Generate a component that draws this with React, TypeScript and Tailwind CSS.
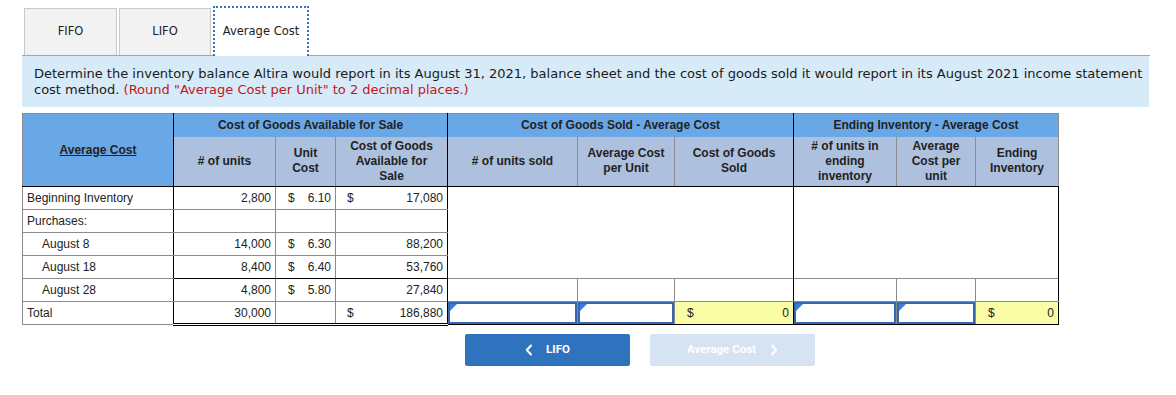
import React from "react";

const Tri = () => (
  <span className="absolute left-0 top-0 w-0 h-0 border-t-[7px] border-t-[#3b7dd8] border-r-[7px] border-r-transparent" />
);

const InputCell = () => (
  <td className="p-0 border-b border-b-black border-r border-r-[#888]">
    <div className="relative h-[22px] border-2 border-[#3568b0] bg-white">
      <Tri />
    </div>
  </td>
);

export default function App() {
  const gray = "border-[#8c8c8c]";
  return (
    <div className="w-[1176px] h-[395px] bg-white font-['Liberation_Sans',Arial,sans-serif] text-[12px] text-[#222] overflow-hidden">
      {/* Tabs */}
      <div className="pt-[6px] ml-[22px] w-[1128px]">
        <div className="flex items-end gap-[2px] pl-[2px] border-b border-[#a6a6a6]">
          <div className="w-[93px] h-[47px] flex items-center justify-center bg-[#f2f2f2] border border-[#c9c9c9] border-b-0 font-['DejaVu_Sans',Verdana,sans-serif] text-[11.5px] text-[#222]">
            FIFO
          </div>
          <div className="w-[92px] h-[47px] flex items-center justify-center bg-[#f2f2f2] border border-[#c9c9c9] border-b-0 font-['DejaVu_Sans',Verdana,sans-serif] text-[11.5px] text-[#222]">
            LIFO
          </div>
          <div className="w-[96px] h-[50px] -mb-px flex items-center justify-center bg-white border-2 border-dotted border-[#2f74c8] border-b-0 font-['DejaVu_Sans',Verdana,sans-serif] text-[11.5px] text-[#222]">
            Average Cost
          </div>
        </div>
      </div>

      {/* Instructions */}
      <div className="ml-[22px] w-[1127px] h-[51px] bg-[#d6eaf8] pl-[12px] pt-[10px] font-['DejaVu_Sans',Verdana,sans-serif] text-[13px] leading-[16px] text-[#1a1a1a] whitespace-nowrap overflow-hidden">
        <div>
          Determine the inventory balance Altira would report in its August 31, 2021, balance sheet and the cost of goods sold it would report in its August 2021 income statement
        </div>
        <div>
          cost method.{" "}
          <span className="text-[#c4161c]">(Round "Average Cost per Unit" to 2 decimal places.)</span>
        </div>
      </div>

      {/* Table */}
      <div className="ml-[22px] mt-[6px]">
        <table className="table-fixed border-collapse w-[1036px]">
          <colgroup>
            <col className="w-[151px]" />
            <col className="w-[102px]" />
            <col className="w-[60px]" />
            <col className="w-[112px]" />
            <col className="w-[130px]" />
            <col className="w-[97px]" />
            <col className="w-[119px]" />
            <col className="w-[103px]" />
            <col className="w-[79px]" />
            <col className="w-[83px]" />
          </colgroup>
          <thead className="font-bold text-[12px] text-[#222] leading-[15px]">
            <tr className="h-[23px]">
              <th rowSpan={2} className={`bg-[#6aa7e6] border-l border-t border-b border-b-black ${gray} border-r border-r-black`}>
                <span className="underline">Average Cost</span>
              </th>
              <th colSpan={3} className="bg-[#6aa7e6] border-t border-t-[#8c8c8c] border-r border-r-black">
                Cost of Goods Available for Sale
              </th>
              <th colSpan={3} className="bg-[#6aa7e6] border-t border-t-[#8c8c8c] border-r border-r-black">
                Cost of Goods Sold - Average Cost
              </th>
              <th colSpan={3} className="bg-[#6aa7e6] border-t border-t-[#8c8c8c] border-r border-r-[#8c8c8c]">
                Ending Inventory - Average Cost
              </th>
            </tr>
            <tr className="h-[50px]">
              <th className="bg-[#adc0dd] border-r border-r-[#8c8c8c] border-b border-b-black">
                # of units
              </th>
              <th className="bg-[#adc0dd] border-r border-r-[#8c8c8c] border-b border-b-black">
                Unit
                <br />
                Cost
              </th>
              <th className="bg-[#adc0dd] border-r border-r-black border-b border-b-black">
                Cost of Goods
                <br />
                Available for
                <br />
                Sale
              </th>
              <th className="bg-[#adc0dd] border-r border-r-[#8c8c8c] border-b border-b-black">
                # of units sold
              </th>
              <th className="bg-[#adc0dd] border-r border-r-[#8c8c8c] border-b border-b-black">
                Average Cost
                <br />
                per Unit
              </th>
              <th className="bg-[#adc0dd] border-r border-r-black border-b border-b-black">
                Cost of Goods
                <br />
                Sold
              </th>
              <th className="bg-[#adc0dd] border-r border-r-[#8c8c8c] border-b border-b-black">
                # of units in
                <br />
                ending
                <br />
                inventory
              </th>
              <th className="bg-[#adc0dd] border-r border-r-[#8c8c8c] border-b border-b-black">
                Average
                <br />
                Cost per
                <br />
                unit
              </th>
              <th className="bg-[#adc0dd] border-r border-r-[#8c8c8c] border-b border-b-black">
                Ending
                <br />
                Inventory
              </th>
            </tr>
          </thead>
          <tbody className="text-[12px] text-[#222] leading-[14px]">
            <tr className="h-[23px]">
              <td className="border-l border-b border-[#8c8c8c] border-r border-r-black pl-[4px]">Beginning Inventory</td>
              <td className="border-b border-[#8c8c8c] border-r text-right pr-[4px]">2,800</td>
              <td className="border-b border-[#8c8c8c] border-r pl-[12px] pr-[4px]">
                <div className="flex justify-between"><span>$</span><span>6.10</span></div>
              </td>
              <td className="border-b border-[#8c8c8c] border-r border-r-black pl-[11px] pr-[4px]">
                <div className="flex justify-between"><span>$</span><span>17,080</span></div>
              </td>
              <td rowSpan={4} colSpan={3} className="border-r border-r-black" />
              <td rowSpan={4} colSpan={3} className="border-r border-r-black" />
            </tr>
            <tr className="h-[23px]">
              <td className="border-l border-b border-[#8c8c8c] border-r border-r-black pl-[4px]">Purchases:</td>
              <td className="border-b border-[#8c8c8c] border-r" />
              <td className="border-b border-[#8c8c8c] border-r" />
              <td className="border-b border-[#8c8c8c] border-r border-r-black" />
            </tr>
            <tr className="h-[23px]">
              <td className="border-l border-b border-[#8c8c8c] border-r border-r-black pl-[19px]">August 8</td>
              <td className="border-b border-[#8c8c8c] border-r text-right pr-[4px]">14,000</td>
              <td className="border-b border-[#8c8c8c] border-r pl-[12px] pr-[4px]">
                <div className="flex justify-between"><span>$</span><span>6.30</span></div>
              </td>
              <td className="border-b border-[#8c8c8c] border-r border-r-black text-right pr-[4px]">88,200</td>
            </tr>
            <tr className="h-[23px]">
              <td className="border-l border-b border-[#8c8c8c] border-r border-r-black pl-[19px]">August 18</td>
              <td className="border-b border-b-black border-r border-r-[#8c8c8c] text-right pr-[4px]">8,400</td>
              <td className="border-b border-b-black border-r border-r-[#8c8c8c] pl-[12px] pr-[4px]">
                <div className="flex justify-between"><span>$</span><span>6.40</span></div>
              </td>
              <td className="border-b border-b-black border-r border-r-black text-right pr-[4px]">53,760</td>
            </tr>
            <tr className="h-[23px]">
              <td className="border-l border-b border-[#8c8c8c] border-r border-r-black pl-[19px]">August 28</td>
              <td className="border-b border-[#8c8c8c] border-r text-right pr-[4px]">4,800</td>
              <td className="border-b border-[#8c8c8c] border-r pl-[12px] pr-[4px]">
                <div className="flex justify-between"><span>$</span><span>5.80</span></div>
              </td>
              <td className="border-b border-[#8c8c8c] border-r border-r-black text-right pr-[4px]">27,840</td>
              <td className="border-t border-t-[#8c8c8c] border-b border-[#8c8c8c] border-r" />
              <td className="border-t border-t-[#8c8c8c] border-b border-[#8c8c8c] border-r" />
              <td className="border-t border-t-[#8c8c8c] border-b border-[#8c8c8c] border-r border-r-black" />
              <td className="border-t border-t-[#8c8c8c] border-b border-[#8c8c8c] border-r" />
              <td className="border-t border-t-[#8c8c8c] border-b border-[#8c8c8c] border-r" />
              <td className="border-t border-t-[#8c8c8c] border-b border-[#8c8c8c] border-r border-r-black" />
            </tr>
            <tr className="h-[23px]">
              <td className="border-l border-b border-[#8c8c8c] border-r border-r-black pl-[4px]">Total</td>
              <td className="border-b-[3px] border-double border-b-black border-r border-r-[#8c8c8c] text-right pr-[4px]">30,000</td>
              <td className="border-b-[3px] border-double border-b-black border-r border-r-[#8c8c8c]" />
              <td className="border-b-[3px] border-double border-b-black border-r border-r-black pl-[11px] pr-[4px]">
                <div className="flex justify-between"><span>$</span><span>186,880</span></div>
              </td>
              <InputCell />
              <InputCell />
              <td className="border-b border-b-black border-r border-r-black bg-[#fafca6] px-[4px]">
                <div className="flex justify-between pl-[8px]"><span>$</span><span>0</span></div>
              </td>
              <InputCell />
              <InputCell />
              <td className="border-b border-b-black border-r border-r-black bg-[#fafca6] px-[4px]">
                <div className="flex justify-between pl-[8px]"><span>$</span><span>0</span></div>
              </td>
            </tr>
          </tbody>
        </table>
      </div>

      {/* Buttons */}
      <div className="flex gap-[20px] ml-[465px] mt-[8px] font-['Roboto',Arial,sans-serif] font-bold text-[11.5px] text-white">
        <div className="w-[165px] h-[32px] rounded-[2px] bg-[#2f72be] flex items-center justify-center gap-[13px]">
          <svg width="8" height="12" viewBox="0 0 8 12" fill="none" stroke="white" strokeWidth="2" strokeLinecap="round" strokeLinejoin="round">
            <path d="M6 1.5 L1.8 6 L6 10.5" />
          </svg>
          <span>LIFO</span>
        </div>
        <div className="w-[165px] h-[32px] rounded-[2px] bg-[#d6e3f3] flex items-center justify-center gap-[14px]">
          <span>Average Cost</span>
          <svg width="8" height="12" viewBox="0 0 8 12" fill="none" stroke="white" strokeWidth="2" strokeLinecap="round" strokeLinejoin="round">
            <path d="M2 1.5 L6.2 6 L2 10.5" />
          </svg>
        </div>
      </div>
    </div>
  );
}
